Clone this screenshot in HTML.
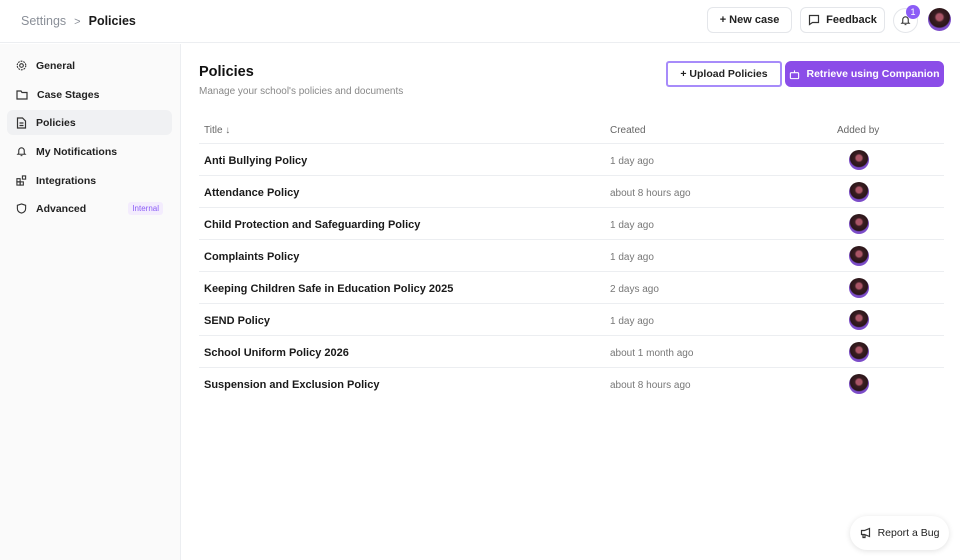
<!DOCTYPE html>
<html><head><meta charset="utf-8"><style>
*{box-sizing:border-box;margin:0;padding:0}
body{width:960px;height:560px;overflow:hidden;font-family:"Liberation Sans",sans-serif;background:#fff;color:#111;position:relative}
.hdr{position:absolute;left:0;top:0;width:960px;height:43px;border-bottom:1px solid #eceef1;background:#fff}
.crumb{position:absolute;left:21px;top:14px;font-size:12.5px;color:#8a8f98}
.crumb b{color:#1a1a1a;font-weight:bold;margin-left:8px}
.crumb .sep{margin-left:8px;font-size:11px}
.btn{position:absolute;height:26px;border:1px solid #e4e6ea;border-radius:6px;background:#fff;font-size:11px;font-weight:bold;display:flex;align-items:center;justify-content:center;gap:6px;color:#222}
.side{position:absolute;left:0;top:44px;width:181px;height:516px;background:#fafafa;border-right:1px solid #eceef1}
.item{position:absolute;left:7px;width:165px;height:25px;border-radius:6px;display:flex;align-items:center;font-size:10.5px;font-weight:bold;color:#222;padding-left:9px}
.item svg{margin-right:9px}
.item.act{background:#f0f1f3}
.tag{position:absolute;right:9px;background:#f3ecfd;color:#8b5cf6;font-size:8px;padding:2px 4px;border-radius:3px;font-weight:normal}
.av{width:20px;height:20px;border-radius:50%;background:radial-gradient(circle at 50% 40%,#a56 0 18%,#3a1d22 28%,#2a1518 55%,#7c4dc9 62%);}
.row{position:absolute;left:199px;width:745px;height:32px;border-bottom:1px solid #eceef1;font-size:11px}
.row .t{position:absolute;left:5px;top:11px;font-weight:bold;color:#1a1a1a}
.row .c{position:absolute;left:411px;top:12px;color:#777;font-size:10px}
.row .a{position:absolute;left:650px;top:6px}
</style></head><body>
<div class="hdr">
<div class="crumb">Settings<span class="sep">&gt;</span><b>Policies</b></div>
<div class="btn" style="left:707px;top:7px;width:85px">+&nbsp;New case</div>
<div class="btn" style="left:800px;top:7px;width:85px"><svg width="12" height="12" viewBox="0 0 12 12" fill="none" stroke="#333" stroke-width="1.2"><path d="M1.5 1.5h9v7h-6l-3 2z"/></svg>Feedback</div>
<div style="position:absolute;left:893px;top:8px;width:25px;height:25px;border:1px solid #e4e6ea;border-radius:50%"><svg style="position:absolute;left:6px;top:6px" width="11" height="11" viewBox="0 0 12 12" fill="none" stroke="#333" stroke-width="1.2"><path d="M3 8V5a3 3 0 016 0v3l1 1H2zM5 10.5h2"/></svg></div>
<div style="position:absolute;left:906px;top:5px;width:14px;height:14px;border-radius:50%;background:#8b5cf6;color:#fff;font-size:9px;text-align:center;line-height:14px">1</div>
<div class="av" style="position:absolute;left:928px;top:8px;width:23px;height:23px"></div>
</div>
<div class="side">
<div class="item" style="top:9px"><svg width="11" height="11" viewBox="0 0 12 12" fill="none" stroke="#333" stroke-width="1.2"><circle cx="6" cy="6" r="2"/><circle cx="6" cy="6" r="4.7" stroke-dasharray="2 1"/></svg>General</div>
<div class="item" style="top:38px"><svg width="12" height="11" viewBox="0 0 12 11" fill="none" stroke="#333" stroke-width="1.2"><path d="M1 2h4l1 1.5h5V10H1z"/></svg>Case Stages</div>
<div class="item act" style="top:66px"><svg width="11" height="12" viewBox="0 0 11 12" fill="none" stroke="#333" stroke-width="1.2"><path d="M1.5 1h5l3 3v7h-8zM3.5 6h4M3.5 8.5h4"/></svg>Policies</div>
<div class="item" style="top:95px"><svg width="11" height="11" viewBox="0 0 12 12" fill="none" stroke="#333" stroke-width="1.2"><path d="M3 8V5a3 3 0 016 0v3l1 1H2zM5 10.5h2"/></svg>My Notifications</div>
<div class="item" style="top:124px"><svg width="11" height="11" viewBox="0 0 12 12" fill="none" stroke="#333" stroke-width="1.2"><rect x="1" y="4" width="3.5" height="3.5"/><rect x="1" y="7.5" width="3.5" height="3.5"/><rect x="4.5" y="7.5" width="3.5" height="3.5"/><rect x="7" y="1" width="3.5" height="3.5"/></svg>Integrations</div>
<div class="item" style="top:152px"><svg width="11" height="11" viewBox="0 0 12 12" fill="none" stroke="#333" stroke-width="1.2"><path d="M6 1l4.5 1.5v3.5c0 3-2.5 4.5-4.5 5C4 10.5 1.5 9 1.5 6V2.5z"/></svg>Advanced<span class="tag">Internal</span></div>
</div>
<div style="position:absolute;left:199px;top:64px;font-size:14.5px;font-weight:bold;color:#111">Policies</div>
<div style="position:absolute;left:199px;top:86px;font-size:10px;color:#888">Manage your school's policies and documents</div>
<div class="btn" style="left:666px;top:61px;width:116px;border:2px solid #a78bfa;border-radius:3px;font-size:10.5px">+&nbsp;Upload Policies</div>
<div class="btn" style="left:785px;top:61px;width:159px;background:#8b4de8;border-color:#8b4de8;color:#fff;font-size:10.5px"><svg width="11" height="11" viewBox="0 0 12 12" fill="none" stroke="#fff" stroke-width="1.2"><rect x="1.5" y="4" width="9" height="6.5" rx="1"/><path d="M6 1.5V4M4.5 7h0M7.5 7h0"/></svg>Retrieve using Companion</div>
<div class="row" style="top:112px;height:32px;font-size:10px;color:#666"><span style="position:absolute;left:5px;top:13px">Title ↓</span><span style="position:absolute;left:411px;top:13px">Created</span><span style="position:absolute;left:638px;top:13px">Added by</span></div>
<div class="row" style="top:144px"><span class="t">Anti Bullying Policy</span><span class="c">1 day ago</span><div class="a av"></div></div>
<div class="row" style="top:176px"><span class="t">Attendance Policy</span><span class="c">about 8 hours ago</span><div class="a av"></div></div>
<div class="row" style="top:208px"><span class="t">Child Protection and Safeguarding Policy</span><span class="c">1 day ago</span><div class="a av"></div></div>
<div class="row" style="top:240px"><span class="t">Complaints Policy</span><span class="c">1 day ago</span><div class="a av"></div></div>
<div class="row" style="top:272px"><span class="t">Keeping Children Safe in Education Policy 2025</span><span class="c">2 days ago</span><div class="a av"></div></div>
<div class="row" style="top:304px"><span class="t">SEND Policy</span><span class="c">1 day ago</span><div class="a av"></div></div>
<div class="row" style="top:336px"><span class="t">School Uniform Policy 2026</span><span class="c">about 1 month ago</span><div class="a av"></div></div>
<div class="row" style="top:368px;border-bottom:none"><span class="t">Suspension and Exclusion Policy</span><span class="c">about 8 hours ago</span><div class="a av"></div></div>
<div style="position:absolute;left:850px;top:516px;width:99px;height:34px;border-radius:17px;background:#fff;box-shadow:0 1px 6px rgba(0,0,0,.12);display:flex;align-items:center;justify-content:center;gap:6px;font-size:10.5px;color:#222"><svg width="12" height="12" viewBox="0 0 12 12" fill="none" stroke="#333" stroke-width="1.2"><path d="M1.5 3.5h3l5-2v8l-5-2h-3zM3 7.5v3h2v-3"/></svg>Report a Bug</div>
</body></html>
